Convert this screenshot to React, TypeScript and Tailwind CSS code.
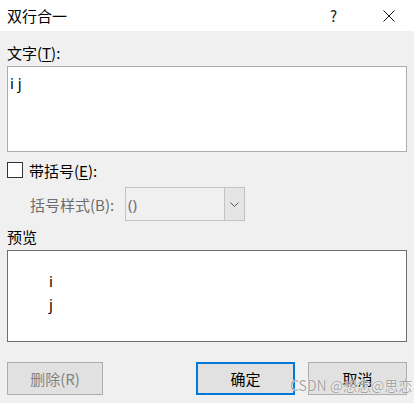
import React from 'react';

const FONT = { fontFamily: '"Noto Sans CJK SC", "Noto Sans", sans-serif' };

function DialogButton({ label, primary = false, disabled = false }: { label: string; primary?: boolean; disabled?: boolean }) {
  return (
    <button
      className={
        'h-[33px] w-[99px] bg-[#e1e1e1] text-[15px] leading-none ' +
        (primary ? 'border-2 border-[#0078d7] ' : 'border border-[#adadad] ') +
        (disabled ? 'text-[#838383]' : 'text-black')
      }
    >
      {label}
    </button>
  );
}

export default function App() {
  return (
    <div className="relative w-[414px] h-[403px] bg-[#f0f0f0] text-black overflow-hidden" style={FONT}>
      {/* Title bar */}
      <div className="h-[31px] bg-white flex items-center pl-[7px]">
        <span className="text-[15px] leading-none">双行合一</span>
        <span className="ml-auto mr-[46px] text-[15px] leading-none text-[#222]">?</span>
        <svg width="12" height="12" viewBox="0 0 12 12" className="mr-[19px]">
          <path d="M0.5 0.5 L11.5 11.5 M11.5 0.5 L0.5 11.5" stroke="#111" strokeWidth="1" />
        </svg>
      </div>

      <div className="px-[7px] flex flex-col">
        {/* Text field */}
        <div className="mt-[11px] h-[20px] flex items-center text-[15px] leading-none">
          文字(<span className="underline underline-offset-2">T</span>):
        </div>
        <div className="mt-[4px] h-[86px] w-full bg-white border border-[#adadad] px-[2px] pt-[3px]">
          <span className="text-[15px] text-black" style={{ fontFamily: '"Noto Sans", sans-serif' }}>
            i j
          </span>
        </div>

        {/* Checkbox row */}
        <div className="mt-[8px] h-[20px] flex items-center gap-[6px]">
          <div className="w-[16px] h-[16px] bg-white border border-[#333]" />
          <span className="text-[15px] leading-none">
            带括号(<span className="underline underline-offset-2">E</span>):
          </span>
        </div>

        {/* Bracket style row */}
        <div className="mt-[7px] h-[34px] flex items-center">
          <span className="ml-[23px] w-[95px] text-[15px] leading-none text-[#6d6d6d]">括号样式(B):</span>
          <div className="h-[34px] w-[120px] flex border border-[#c2c2c2] bg-[#f0f0f0]">
            <div className="flex-1 flex items-center pl-[2px] text-[15px] text-[#6d6d6d]" style={{ fontFamily: '"Noto Sans", sans-serif' }}>
              ()
            </div>
            <div className="w-[20px] h-full bg-[#e5e5e5] border-l border-[#c2c2c2] flex items-center justify-center">
              <svg width="9" height="5" viewBox="0 0 9 5">
                <path d="M0.5 0.5 L4.5 4.5 L8.5 0.5" stroke="#555" strokeWidth="1" fill="none" />
              </svg>
            </div>
          </div>
        </div>

        {/* Preview */}
        <div className="mt-[5px] h-[20px] flex items-center text-[15px] leading-none">预览</div>
        <div className="mt-[4px] h-[92px] w-full bg-white border border-[#6e6e6e] pl-[41px] pt-[19px]">
          <div className="flex flex-col text-[15px] leading-[23px] text-black" style={{ fontFamily: '"Noto Sans", sans-serif' }}>
            <span>i</span>
            <span>j</span>
          </div>
        </div>

        {/* Buttons */}
        <div className="mt-[20px] flex items-center">
          <DialogButton label="删除(R)" disabled />
          <div className="ml-[93px]">
            <DialogButton label="确定" primary />
          </div>
          <div className="ml-[13px]">
            <DialogButton label="取消" />
          </div>
        </div>
      </div>

      {/* Watermark */}
      <span
        className="absolute left-[290px] top-[378px] text-[14px] leading-none text-[#8c8c8c]/80 whitespace-nowrap"
        style={{ textShadow: '0 0 1px #fff, 0 0 1px #fff' }}
      >
        CSDN @想念@思恋
      </span>
    </div>
  );
}
